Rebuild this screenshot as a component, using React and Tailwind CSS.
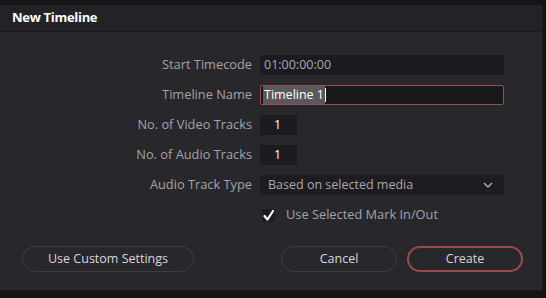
import React from "react";

function Row({ label, children }) {
  return (
    <div className="flex items-center h-[20px]">
      <div className="w-[252px] text-right text-[12.8px] text-[#a4a3a8]">{label}</div>
      <div className="ml-[8px] flex-1">{children}</div>
    </div>
  );
}

export default function App() {
  return (
    <div
      className="w-[546px] h-[298px] bg-[#151517] pt-[5px] overflow-hidden"
      style={{ fontFamily: '"Open Sans", "Noto Sans", sans-serif' }}
    >
      <div className="w-[543px] h-[286px] bg-[#28272c] border-r border-b border-[#1b1a1e] flex flex-col">
        <div className="h-[27px] bg-[#232227] border-b border-[#1a191d] flex items-center px-[12px]">
          <span className="text-[13px] font-bold text-white tracking-[-0.3px]">New Timeline</span>
        </div>

        <div className="flex flex-col gap-[10px] pt-[23px] pr-[40px]">
          <Row label="Start Timecode">
            <div className="h-[20px] mr-[-2px] bg-[#1c1b1f] flex items-center px-[4px] text-[12.5px] text-[#a9a8ad]">
              01:00:00:00
            </div>
          </Row>
          <Row label="Timeline Name">
            <div className="h-[20px] mr-[-2px] bg-[#19181b] border border-[#9c4a4a] rounded-[2px] flex items-center px-[2px] text-[12.5px]">
              <span className="bg-[#5a585e] text-white px-[1px]">Timeline 1</span>
              <span className="w-px h-[14px] bg-white"></span>
            </div>
          </Row>
          <Row label="No. of Video Tracks">
            <div className="w-[37px] h-[20px] bg-[#1c1b1f] flex items-center pl-[14px] text-[12.5px] text-white">1</div>
          </Row>
          <Row label="No. of Audio Tracks">
            <div className="w-[37px] h-[20px] bg-[#1c1b1f] flex items-center pl-[14px] text-[12.5px] text-white">1</div>
          </Row>
          <Row label="Audio Track Type">
            <div className="h-[20px] mr-[-2px] bg-[#1d1c20] flex items-center justify-between px-[8px] text-[12.5px] text-[#a9a8ad]">
              <span>Based on selected media</span>
              <svg width="12" height="8" viewBox="0 0 12 8" fill="none" stroke="#a9a8ad" strokeWidth="1.5" className="mr-[2px]">
                <path d="M2 2l4 4 4-4" />
              </svg>
            </div>
          </Row>
          <div className="flex items-center h-[20px] pl-[262px]">
            <div className="w-[13px] h-[13px] bg-[#1c1b1f] flex items-center justify-center">
              <svg width="13" height="13" viewBox="0 0 13 13" fill="none" stroke="white" strokeWidth="2.2" strokeLinecap="round" strokeLinejoin="round">
                <path d="M2.5 7l3 3.5L11 2" />
              </svg>
            </div>
            <span className="ml-[11px] text-[12.8px] text-[#a4a3a8]">Use Selected Mark In/Out</span>
          </div>
        </div>

        <div className="flex items-center mt-[21px] pl-[22px]">
          <button className="shrink-0 w-[172px] h-[26px] rounded-full border border-[#3e3d42] bg-[#28272c] text-[12.5px] text-[#d8d7dc]">
            Use Custom Settings
          </button>
          <button className="shrink-0 ml-[87px] w-[116px] h-[26px] rounded-full border border-[#3e3d42] bg-[#28272c] text-[12.5px] text-[#d8d7dc]">
            Cancel
          </button>
          <button className="shrink-0 ml-[10px] w-[116px] h-[26px] rounded-full border-2 border-[#9c4a4a] bg-[#28272c] text-[12.5px] text-[#d8d7dc]">
            Create
          </button>
        </div>
      </div>
    </div>
  );
}
